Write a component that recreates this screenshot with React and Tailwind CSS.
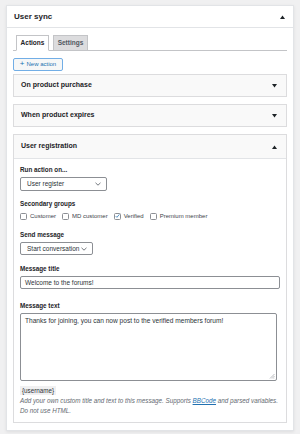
import React from "react";

const font = { fontFamily: '"Liberation Sans", Arial, sans-serif' };

function TriUp({ className = "" }) {
  return (
    <svg width="5" height="4" viewBox="0 0 5 4" className={className}>
      <path d="M0 4 L2.5 0.5 L5 4 Z" fill="#1d2327" />
    </svg>
  );
}
function TriDown({ className = "" }) {
  return (
    <svg width="5" height="4" viewBox="0 0 5 4" className={className}>
      <path d="M0 0 L2.5 3.5 L5 0 Z" fill="#1d2327" />
    </svg>
  );
}
function Chevron() {
  return (
    <svg width="6" height="4" viewBox="0 0 6 4">
      <path d="M0.5 0.8 L3 3.2 L5.5 0.8" stroke="#50575e" strokeWidth="0.8" fill="none" />
    </svg>
  );
}

function Checkbox({ checked, label }) {
  return (
    <label className="flex items-center gap-[3px] mr-[6px]">
      <span className="w-[7px] h-[7px] border border-[#8c8f94] rounded-[1.5px] bg-white flex items-center justify-center">
        {checked && (
          <svg width="6" height="6" viewBox="0 0 6 6">
            <path d="M0.8 3.1 L2.3 4.6 L5.3 1" stroke="#2271b1" strokeWidth="0.9" fill="none" />
          </svg>
        )}
      </span>
      <span className="text-[6px] text-[#3c434a]">{label}</span>
    </label>
  );
}

function Label({ children, className = "" }) {
  return (
    <div className={"text-[6.3px] font-bold text-[#1d2327] leading-[8px] " + className}>{children}</div>
  );
}

function Collapsed({ title }) {
  return (
    <div className="h-[23px] border border-[#dcdcde] bg-[#f9f9f9] flex items-center justify-between pl-[7px] pr-[9px]">
      <span className="text-[7px] font-semibold text-[#1d2327]">{title}</span>
      <TriDown />
    </div>
  );
}

export default function App() {
  return (
    <div style={font} className="w-[300px] h-[434px] bg-[#f0f0f1] pt-[5px] px-[6px] overflow-hidden">
      <div className="bg-white border border-[#e2e4e7] shadow-[0_1px_3px_rgba(0,0,0,0.08)]">
        <div className="h-[22px] border-b border-[#e2e4e7] flex items-center justify-between pl-[7px] pr-[8px]">
          <span className="text-[8px] font-semibold text-[#1d2327]">User sync</span>
          <TriUp />
        </div>
        <div className="px-[6px] pt-[6px] pb-[7px]">
          {/* tabs */}
          <div className="flex items-end gap-[4px] pl-[3px] border-b border-[#c3c4c7] h-[17px]">
            <div className="h-[16px] w-[33px] border border-[#c3c4c7] border-b-white -mb-px bg-white flex items-center justify-center text-[6.5px] font-bold text-[#1d2327]">
              Actions
            </div>
            <div className="h-[16px] w-[35px] border border-[#c3c4c7] bg-[#dcdcde] -mb-px flex items-center justify-center text-[6.5px] font-bold text-[#50575e]">
              Settings
            </div>
          </div>
          {/* new action */}
          <div className="mt-[7px] flex">
            <div className="h-[13px] w-[50px] border border-[#72aee6] rounded-[2px] bg-[#f6f7f7] flex items-center justify-center gap-[2px] text-[6px] text-[#2271b1]">
              <span className="text-[8px] leading-none -mt-px">+</span>
              <span>New action</span>
            </div>
          </div>
          <div className="mt-[3px] flex flex-col gap-[7px]">
            <Collapsed title="On product purchase" />
            <Collapsed title="When product expires" />
            <div className="border border-[#dcdcde]">
              <div className="h-[24px] bg-[#f9f9f9] border-b border-[#e2e4e7] flex items-center justify-between pl-[7px] pr-[9px]">
                <span className="text-[7px] font-semibold text-[#1d2327]">User registration</span>
                <TriUp />
              </div>
              <div className="px-[6px] pt-[7px] pb-[6px]">
                <Label>Run action on...</Label>
                <div className="mt-[3px] h-[14px] w-[87px] border border-[#8c8f94] rounded-[2px] flex items-center justify-between pl-[6px] pr-[5px] text-[6.5px] text-[#2c3338]">
                  <span>User register</span>
                  <Chevron />
                </div>
                <Label className="mt-[9px]">Secondary groups</Label>
                <div className="mt-[4px] h-[8px] flex items-center">
                  <Checkbox label="Customer" />
                  <Checkbox label="MD customer" />
                  <Checkbox label="Verified" checked />
                  <Checkbox label="Premium member" />
                </div>
                <Label className="mt-[11px]">Send message</Label>
                <div className="mt-[3px] h-[13px] w-[73px] border border-[#8c8f94] rounded-[2px] flex items-center justify-between pl-[6px] pr-[5px] text-[6.5px] text-[#2c3338]">
                  <span>Start conversation</span>
                  <Chevron />
                </div>
                <Label className="mt-[10px]">Message title</Label>
                <div className="mt-[3px] h-[13px] w-[260px] border border-[#8c8f94] rounded-[2px] flex items-center pl-[4px] text-[6.5px] text-[#2c3338]">
                  Welcome to the forums!
                </div>
                <Label className="mt-[13px]">Message text</Label>
                <div className="mt-[3px] h-[68px] w-[257px] border border-[#8c8f94] rounded-[2px] relative pl-[4px] pt-[2px] text-[6.6px] text-[#2c3338] leading-[9px]">
                  Thanks for joining, you can now post to the verified members forum!
                  <svg width="6" height="6" viewBox="0 0 6 6" className="absolute right-[1px] bottom-[1px]">
                    <path d="M5.5 1 L1 5.5 M5.5 3 L3 5.5 M5.5 4.8 L4.8 5.5" stroke="#8c8f94" strokeWidth="0.6" />
                  </svg>
                </div>
                <div className="mt-[5px] flex">
                  <span className="h-[9px] px-[2px] bg-[#f0f0f1] text-[6.3px] leading-[9px] text-[#2c3338]">{"{username}"}</span>
                </div>
                <div className="mt-[1px] text-[6.3px] italic text-[#646970] leading-[10px] whitespace-nowrap">
                  Add your own custom title and text to this message. Supports{" "}
                  <span className="underline text-[#2271b1]">BBCode</span> and parsed variables.
                  <br />
                  Do not use HTML.
                </div>
              </div>
            </div>
          </div>
        </div>
      </div>
    </div>
  );
}
